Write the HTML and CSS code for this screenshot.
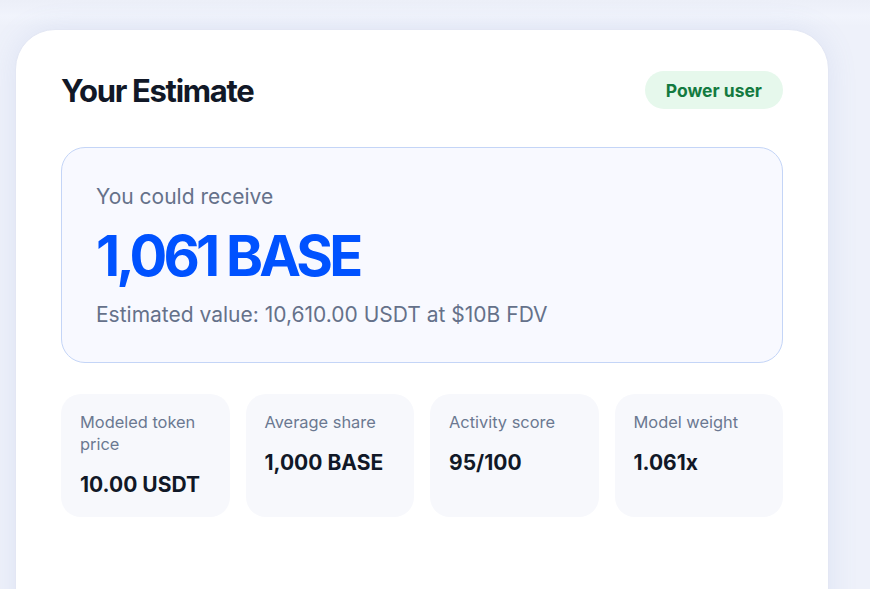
FILE: index.html
```html
<!DOCTYPE html>
<html lang="en">
<head>
  <meta charset="UTF-8">
  <meta name="viewport" content="width=device-width, initial-scale=1.0">
  <title>Your Estimate</title>
  <link rel="stylesheet" href="styles.css">
</head>
<body>
  <div class="page">
    <section class="card">
      <!-- Header -->
      <div class="card-head">
        <h1>Your Estimate</h1>
        <span class="badge">Power user</span>
      </div>

      <!-- Main estimate -->
      <div class="hero">
        <p class="hero-label">You could receive</p>
        <p class="hero-amount">1,061 BASE</p>
        <p class="hero-value">Estimated value: 10,610.00 USDT at $10B FDV</p>
      </div>

      <!-- Stats -->
      <div class="stats">
        <div class="stat">
          <p class="stat-label">Modeled token price</p>
          <p class="stat-value">10.00 USDT</p>
        </div>
        <div class="stat">
          <p class="stat-label">Average share</p>
          <p class="stat-value">1,000 BASE</p>
        </div>
        <div class="stat">
          <p class="stat-label">Activity score</p>
          <p class="stat-value">95/100</p>
        </div>
        <div class="stat">
          <p class="stat-label">Model weight</p>
          <p class="stat-value">1.061x</p>
        </div>
      </div>
    </section>
  </div>
</body>
</html>
```

FILE: styles.css
```css
* {
  box-sizing: border-box;
}

body {
  margin: 0;
  padding: 0;
  height: 589px;
  overflow: hidden;
  background-color: #f0f3fc;
  background-image: linear-gradient(180deg, #eceff8 0px, #eef1fa 8px, #f1f4fc 16px, #eef1fa 26px, #eef1fa 100%);
  font-family: Inter, "Noto Sans", sans-serif;
  color: #111827;
}

p {
  margin: 0;
}

.page {
  padding: 29px 41px 0 15px;
}

.card {
  background-color: #ffffff;
  border: 1px solid #e3e7f4;
  border-radius: 40px;
  padding: 41px 45px 80px;
  min-height: 620px;
  box-shadow: 0 0 30px rgba(110, 130, 200, 0.12);
}

.card-head {
  display: flex;
  justify-content: space-between;
  align-items: center;
  margin-bottom: 38px;
}

h1 {
  margin: 0;
  font-size: 31px;
  font-weight: 700;
  letter-spacing: -0.042em;
  color: #111827;
}

.badge {
  display: inline-flex;
  align-items: center;
  height: 38px;
  padding: 0 21px;
  border-radius: 19px;
  background-color: #e6f8ec;
  color: #137a40;
  font-size: 17.5px;
  font-weight: 700;
}

.hero {
  background-color: #f8f9ff;
  border: 1px solid #c4d5f7;
  border-radius: 24px;
  padding: 35px 34px 33px;
  margin-bottom: 31px;
}

.hero-label {
  font-size: 21px;
  line-height: 28px;
  color: #65718a;
}

.hero-amount {
  margin-top: 13px;
  font-size: 56px;
  line-height: 64px;
  font-weight: 700;
  letter-spacing: -0.068em;
  color: #0052ff;
}

.hero-value {
  margin-top: 13px;
  font-size: 21px;
  line-height: 28px;
  color: #65718a;
}

.stats {
  display: grid;
  grid-template-columns: repeat(4, 1fr);
  gap: 16px;
}

.stat {
  background-color: #f7f8fc;
  border-radius: 20px;
  padding: 17px 19px 18px;
  min-height: 122px;
}

.stat-label {
  font-size: 16.4px;
  line-height: 22px;
  color: #6b7891;
}

.stat-value {
  margin-top: 16px;
  font-size: 21px;
  line-height: 28px;
  font-weight: 700;
  color: #111827;
}
```
